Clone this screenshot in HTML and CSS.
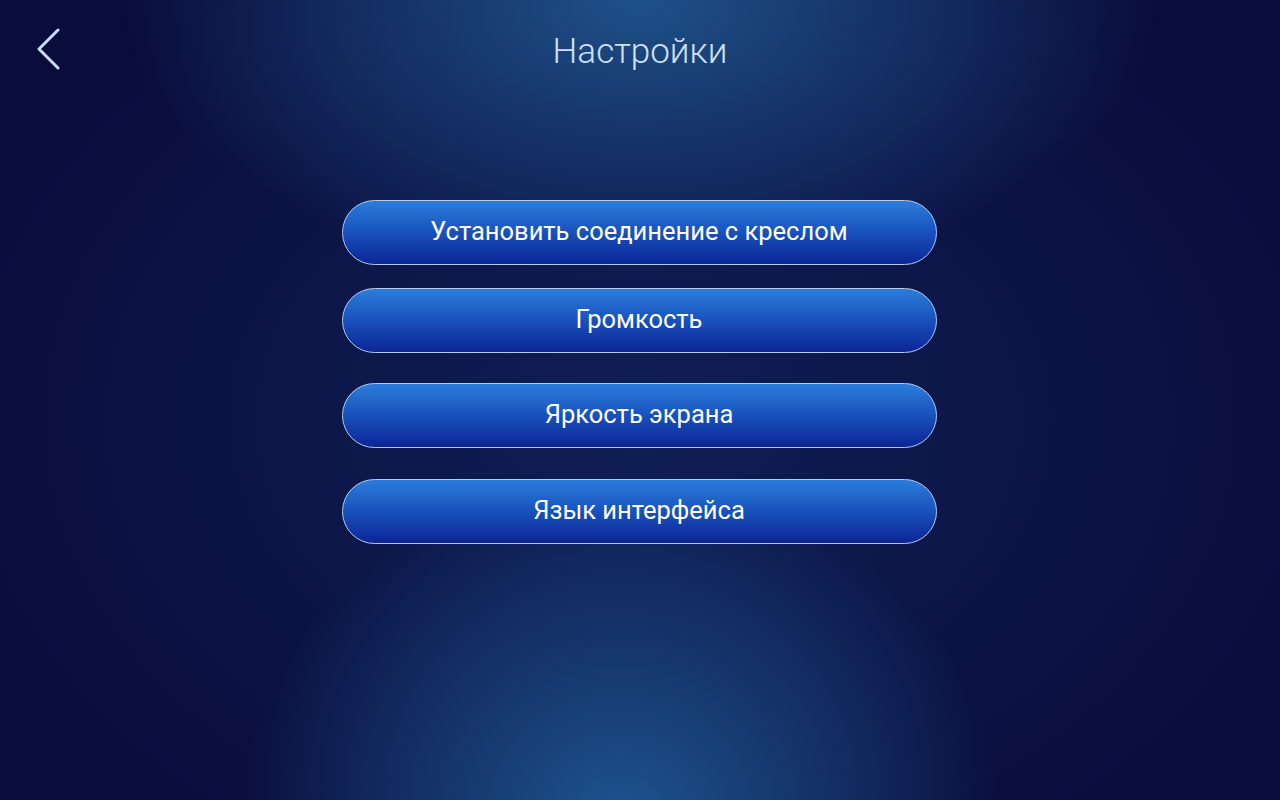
FILE: index.html
```html
<!DOCTYPE html>
<html lang="ru">
<head>
<meta charset="utf-8">
<title>Настройки</title>
<link rel="stylesheet" href="styles.css">
</head>
<body>
<div class="screen">
  <header class="topbar">
    <button class="back" aria-label="Назад">
      <svg width="26" height="42" viewBox="0 0 26 42"><polyline points="22,2 3,21 22,40" fill="none" stroke="#c9dcf6" stroke-width="3" stroke-linecap="round" stroke-linejoin="round"/></svg>
    </button>
    <h1 class="title">Настройки</h1>
  </header>
  <main class="menu">
    <button class="item item-1">Установить соединение с креслом</button>
    <button class="item item-2">Громкость</button>
    <button class="item item-3">Яркость экрана</button>
    <button class="item item-4">Язык интерфейса</button>
  </main>
</div>
</body>
</html>
```
FILE: styles.css
```css
html, body {
  margin: 0;
  padding: 0;
  width: 1280px;
  height: 800px;
  overflow: hidden;
}
.screen {
  width: 1280px;
  height: 800px;
  position: relative;
  font-family: Roboto, "Noto Sans", sans-serif;
  background:
    radial-gradient(ellipse 520px 280px at 640px 0px, rgba(34,92,150,0.85), rgba(34,92,150,0) 100%),
    radial-gradient(ellipse 380px 340px at 620px 820px, rgba(32,92,152,0.9), rgba(32,92,152,0) 100%),
    radial-gradient(ellipse 700px 520px at 640px 420px, #0f1f55, #0a0d3c 100%);
  background-color: #0a0d3c;
  display: flex;
  flex-direction: column;
}
.topbar {
  height: 106px;
  display: flex;
  align-items: flex-start;
  justify-content: center;
  position: relative;
}
.back {
  position: absolute;
  left: 36px;
  top: 28px;
  background: none;
  border: 0;
  padding: 0;
  cursor: pointer;
}
.title {
  margin: 31px 0 0;
  font-weight: 300;
  font-size: 35px;
  color: #cfe1f6;
  letter-spacing: 0;
}
.menu {
  display: flex;
  flex-direction: column;
  align-items: center;
  padding-top: 94px;
  padding-right: 2px;
}
.item {
  width: 595px;
  height: 65px;
  border-radius: 33px;
  border: 1px solid #b3cbf2;
  background: linear-gradient(to bottom, #2b7dda 0%, #1a55c0 45%, #0c2596 100%);
  color: #ffffff;
  font-family: Roboto, "Noto Sans", sans-serif;
  font-size: 25.5px;
  font-weight: 400;
  display: flex;
  align-items: center;
  justify-content: center;
  padding: 0 0 4px;
  box-sizing: border-box;
}
.item-2 { margin-top: 23px; }
.item-3 { margin-top: 30px; }
.item-4 { margin-top: 31px; }
```
